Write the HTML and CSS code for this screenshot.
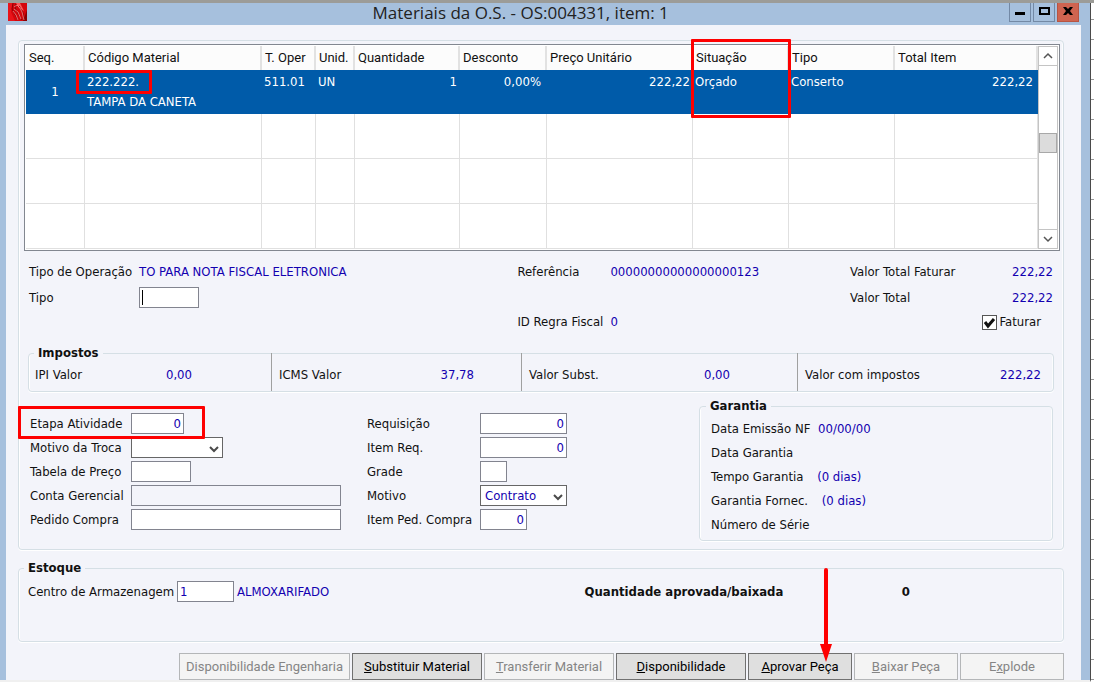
FILE: index.html
```html
<!DOCTYPE html>
<html lang="pt-br">
<head>
    <meta charset="UTF-8">
    <meta name="viewport" content="width=device-width, initial-scale=1.0">
    <title>Materiais da O.S.</title>
    <link rel="stylesheet" href="styles.css">
</head>
<body>
    <div class="window">
        <!-- Barra de título -->
        <header class="title-bar">
            <svg class="app-icon" viewBox="0 0 19 18" aria-hidden="true">
                <rect width="19" height="18" fill="#d4060c"/>
                <path d="M0 0h5l-2 9 4 9H0z" fill="#e8141a"/>
                <path d="M8 0h4l4 8-5-3z" fill="#fa5a5a"/>
                <path d="M19 7v11h-4z" fill="#8c0004"/>
                <path d="M5 0l-1 6 6 11M8 1l-1 4 7 12M11 3l4 7 1 7" fill="none" stroke="#8a0003"/>
                <path d="M6 4l3-2 3 3 2 4 2 8M6 6l4 3 3 7M5 8l3 4 2 5" fill="none" stroke="#ff9c9c" stroke-width=".7"/>
            </svg>
            <h1>Materiais da O.S. - OS:004331, item: 1</h1>
            <div class="window-buttons">
                <button type="button" aria-label="Minimizar">
                    <svg viewBox="0 0 20 18"><path d="M5 9h10v3H5z"/></svg>
                </button>
                <button type="button" aria-label="Maximizar">
                    <svg viewBox="0 0 20 18"><path fill-rule="evenodd" d="M5 4h11v8H5zM7 6v4h7V6z"/></svg>
                </button>
                <button type="button" class="close" aria-label="Fechar">
                    <svg viewBox="0 0 20 18"><path d="M5 4h3l2 2 2-2h3l-3 4 3 4h-3l-2-2-2 2H5l3-4z"/></svg>
                </button>
            </div>
        </header>

        <main class="content">
            <section class="group">
                <!-- Grade de materiais -->
                <div class="grid-box">
                    <table>
                        <colgroup>
                            <col class="c-seq"><col class="c-codigo"><col class="c-oper"><col class="c-unid"><col class="c-qtd">
                            <col class="c-desc"><col class="c-preco"><col class="c-sit"><col class="c-tipo"><col class="c-total">
                        </colgroup>
                        <thead>
                            <tr>
                                <th>Seq.</th>
                                <th>Código Material</th>
                                <th>T. Oper</th>
                                <th>Unid.</th>
                                <th>Quantidade</th>
                                <th>Desconto</th>
                                <th>Preço Unitário</th>
                                <th>Situação<span class="mark mark-situacao"></span></th>
                                <th>Tipo</th>
                                <th>Total Item</th>
                            </tr>
                        </thead>
                        <tbody>
                            <tr class="selected">
                                <td class="seq">1</td>
                                <td>222.222.<br>TAMPA DA CANETA<span class="mark mark-codigo"></span></td>
                                <td>511.01</td>
                                <td>UN</td>
                                <td class="num">1</td>
                                <td class="num desconto">0,00%</td>
                                <td class="num">222,22</td>
                                <td>Orçado</td>
                                <td>Conserto</td>
                                <td class="num total">222,22</td>
                            </tr>
                            <tr><td></td><td></td><td></td><td></td><td></td><td></td><td></td><td></td><td></td><td></td></tr>
                            <tr><td></td><td></td><td></td><td></td><td></td><td></td><td></td><td></td><td></td><td></td></tr>
                            <tr><td></td><td></td><td></td><td></td><td></td><td></td><td></td><td></td><td></td><td></td></tr>
                        </tbody>
                    </table>
                    <div class="scrollbar">
                        <button type="button" aria-label="Subir"><svg viewBox="0 0 10 10"><path d="M1 7l4-4 4 4"/></svg></button>
                        <div class="track"><div class="thumb"></div></div>
                        <button type="button" aria-label="Descer"><svg viewBox="0 0 10 10"><path d="M1 3l4 4 4-4"/></svg></button>
                    </div>
                </div>

                <!-- Dados da operação -->
                <div class="info">
                    <span>Tipo de Operação</span>
                    <span class="value">TO PARA NOTA FISCAL ELETRONICA</span>
                    <span>Referência</span>
                    <span class="value">00000000000000000123</span>
                    <span>Valor Total Faturar</span>
                    <span class="value right">222,22</span>

                    <label for="tipo">Tipo</label>
                    <div class="tipo-field"><input type="text" id="tipo" class="w60"><i class="caret"></i></div>
                    <span class="total-label">Valor Total</span>
                    <span class="value right">222,22</span>

                    <span class="regra-label">ID Regra Fiscal</span>
                    <span class="value">0</span>
                    <div class="faturar">
                        <span class="check">
                            <input type="checkbox" id="faturar" checked>
                            <svg viewBox="0 0 15 15" aria-hidden="true"><path d="M3 7l3 4 6-7" /></svg>
                        </span>
                        <label for="faturar">Faturar</label>
                    </div>
                </div>

                <fieldset class="impostos">
                    <legend>Impostos</legend>
                    <div class="taxes">
                        <div class="tax ipi"><span>IPI Valor</span><span class="value">0,00</span></div>
                        <div class="tax icms"><span>ICMS Valor</span><span class="value">37,78</span></div>
                        <div class="tax subst"><span>Valor Subst.</span><span class="value">0,00</span></div>
                        <div class="tax"><span>Valor com impostos</span><span class="value">222,22</span></div>
                    </div>
                </fieldset>

                <div class="details">
                    <div class="fields fields-left">
                        <label for="etapa">Etapa Atividade</label>
                        <div class="etapa-field"><input type="text" id="etapa" class="w53 right" value="0"></div>
                        <label for="motivo-troca">Motivo da Troca</label>
                        <div class="select w92">
                            <select id="motivo-troca"><option></option></select>
                            <svg viewBox="0 0 10 8" aria-hidden="true"><path d="M1 2l4 4 4-4"/></svg>
                        </div>
                        <label for="tabela">Tabela de Preço</label>
                        <input type="text" id="tabela" class="w60">
                        <label for="conta">Conta Gerencial</label>
                        <input type="text" id="conta" disabled>
                        <label for="pedido">Pedido Compra</label>
                        <input type="text" id="pedido">
                        <span class="mark mark-etapa"></span>
                    </div>

                    <div class="fields fields-middle">
                        <label for="requisicao">Requisição</label>
                        <input type="text" id="requisicao" class="right" value="0">
                        <label for="item-req">Item Req.</label>
                        <input type="text" id="item-req" class="right" value="0">
                        <label for="grade">Grade</label>
                        <input type="text" id="grade" class="w27">
                        <label for="motivo">Motivo</label>
                        <div class="select">
                            <select id="motivo"><option>Contrato</option></select>
                            <svg viewBox="0 0 10 8" aria-hidden="true"><path d="M1 2l4 4 4-4"/></svg>
                        </div>
                        <label for="item-ped">Item Ped. Compra</label>
                        <input type="text" id="item-ped" class="w47 right" value="0">
                    </div>

                    <fieldset class="garantia">
                        <legend>Garantia</legend>
                        <p>Data Emissão NF <span class="value">00/00/00</span></p>
                        <p>Data Garantia</p>
                        <p>Tempo Garantia <span class="value dias">(0 dias)</span></p>
                        <p>Garantia Fornec. <span class="value dias">(0 dias)</span></p>
                        <p>Número de Série</p>
                    </fieldset>
                </div>
            </section>

            <!-- Estoque -->
            <fieldset class="estoque">
                <legend>Estoque</legend>
                <div class="estoque-row">
                    <div class="armazem">
                        <label for="centro">Centro de Armazenagem</label>
                        <input type="text" id="centro" class="w57" value="1">
                        <span class="value">ALMOXARIFADO</span>
                    </div>
                    <strong>Quantidade aprovada/baixada</strong>
                    <strong>0</strong>
                </div>
            </fieldset>

            <!-- Botões de ação -->
            <div class="actions">
                <button type="button" class="wide" disabled>Disponibilidade Engenharia</button>
                <button type="button" class="medium"><u>S</u>ubstituir Material</button>
                <button type="button" class="medium" disabled><u>T</u>ransferir Material</button>
                <button type="button" class="medium"><u>D</u>isponibilidade</button>
                <div class="aprovar">
                    <button type="button"><u>A</u>provar Peça</button>
                    <svg class="arrow" viewBox="0 0 12 94" aria-hidden="true">
                        <path d="M6 2v78" stroke="#fe0000" stroke-width="4" stroke-linecap="round"/>
                        <path d="M0 76h12L6 94z" fill="#fe0000"/>
                    </svg>
                </div>
                <button type="button" disabled><u>B</u>aixar Peça</button>
                <button type="button" disabled>E<u>x</u>plode</button>
            </div>
        </main>
    </div>
</body>
</html>
```
FILE: styles.css
```css
* {
    margin: 0;
    padding: 0;
    box-sizing: border-box;
}

body {
    font-family: "DejaVu Sans Condensed", "DejaVu Sans", Tahoma, sans-serif;
    font-size: 13px;
    line-height: 16px;
    color: #111;
    padding-right: 3px;
    border-top: 3px solid #9c9c98;
    background: repeating-linear-gradient(#fff 0, #fff 19px, #999 19px, #999 20px);
}

/* Janela */
.window {
    background-color: #a6c0dd;
    border-right: 1px solid #4a4a4a;
    border-bottom: 2px solid #f0f0f0;
    padding: 0 9px 0 6px;
}

.title-bar {
    display: grid;
    grid-template-columns: 8fr auto 9fr;
    align-items: start;
    height: 22px;
    padding: 0 2px;
}

.title-bar h1 {
    font-family: "Open Sans", "Noto Sans", sans-serif;
    font-size: 17px;
    font-weight: normal;
    line-height: 19px;
    color: #222;
}

.app-icon {
    width: 19px;
    height: 18px;
}

.window-buttons {
    display: flex;
    justify-content: flex-end;
    gap: 2px;
}

.window-buttons button {
    width: 22px;
    height: 19px;
    border: 1px solid #7389a5;
    border-top: none;
    background-color: #a6c0dd;
}

.window-buttons svg {
    display: block;
    width: 20px;
    height: 18px;
}

.window-buttons .close {
    background-color: #cf6450;
    border-color: #b85442;
}

.content {
    background-color: #f3f4fa;
    padding: 15px 17px 0 12px;
}

.value {
    color: #1200b0;
}

.right {
    text-align: right;
}

/* Caixas de grupo */
.group,
fieldset {
    border: 1px solid #d5dfe5;
    border-radius: 4px;
    box-shadow: inset 1px 0 #fff, inset -1px 0 #fbfcfd, 0 1px #fff;
}

fieldset {
    min-width: 0;
}

.group {
    padding: 3px 3px 8px 5px;
}

legend {
    font-weight: bold;
    line-height: 16px;
    margin-left: 6px;
    padding: 0 4px;
}

/* Grade de materiais */
.grid-box {
    display: flex;
    border: 1px solid #828790;
    padding: 1px;
    background-color: #fff;
}

table {
    flex: 1;
    width: 100%;
    table-layout: fixed;
    border-collapse: separate;
    border-spacing: 0;
}

.c-seq { width: 59px; }
.c-codigo { width: 177px; }
.c-oper { width: 54px; }
.c-unid { width: 39px; }
.c-qtd { width: 105px; }
.c-desc { width: 87px; }
.c-preco { width: 146px; }
.c-sit { width: 96px; }
.c-tipo { width: 106px; }

th {
    position: relative;
    height: 24px;
    padding: 0 3px;
    border-right: 2px solid #e2e2e2;
    background-color: #fcfcfc;
    font-family: Roboto, "Liberation Sans", Arial, sans-serif;
    font-weight: normal;
    text-align: left;
    white-space: nowrap;
}

td {
    position: relative;
    height: 45px;
    padding: 2px 2px 0;
    border-right: 1px solid #e0e0e0;
    border-bottom: 1px solid #e0e0e0;
    line-height: 20px;
    vertical-align: top;
    white-space: nowrap;
}

.selected td {
    height: 44px;
    color: #fff;
    background-color: #005ba9;
    border-color: #005ba9;
}

td.seq {
    padding-top: 0;
    text-align: center;
    vertical-align: middle;
}

td.num {
    text-align: right;
}

td.desconto {
    padding-right: 5px;
}

td.total {
    padding-right: 4px;
}

.scrollbar {
    display: flex;
    flex-direction: column;
    width: 20px;
    border: 1px solid #c4c4c4;
}

.scrollbar button {
    height: 19px;
    border: none;
    background-color: #fff;
}

.scrollbar button:first-child {
    border-bottom: 1px solid #c4c4c4;
}

.scrollbar button:last-child {
    border-top: 1px solid #c4c4c4;
}

.scrollbar svg {
    width: 10px;
    height: 10px;
    fill: none;
    stroke: #555;
    stroke-width: 1.5;
}

.track {
    flex: 1;
    padding-top: 67px;
}

.thumb {
    height: 20px;
    border: 1px solid #a8a8a8;
    background-color: #dcdcdc;
}

/* Dados da operação */
.info {
    display: grid;
    grid-template-columns: 110px 379fr 93px 240fr 120px 83px;
    grid-template-rows: 18px 21px 16px;
    row-gap: 6px;
    align-items: center;
    padding: 12px 7px 0 5px;
}

.info span,
.info label {
    white-space: nowrap;
}

.total-label {
    grid-column: 5;
}

.regra-label {
    grid-column: 3;
}

.faturar {
    grid-column: 5 / 7;
    display: flex;
    justify-content: flex-end;
    align-items: center;
    gap: 3px;
    padding-right: 12px;
}

.check {
    position: relative;
    width: 15px;
    height: 15px;
}

.check input {
    display: block;
    appearance: none;
    width: 15px;
    height: 15px;
    border: 1px solid #555;
    background-color: #fff;
}

.check svg {
    position: absolute;
    inset: 0;
    fill: none;
    stroke: #111;
    stroke-width: 3;
    pointer-events: none;
}

/* Campos */
input[type="text"],
select {
    width: 100%;
    height: 21px;
    padding: 0 2px;
    border: 1px solid #82848f;
    background-color: #fff;
    font: inherit;
    color: #1200b0;
}

input[type="text"]:disabled {
    background-color: #f3f4fa;
}

input.w27 { width: 27px; }
input.w47 { width: 47px; }
input.w53 { width: 53px; }
input.w57 { width: 57px; }
input.w60 { width: 60px; }
.select.w92 { width: 92px; }

.tipo-field {
    position: relative;
    height: 21px;
}

.caret {
    position: absolute;
    left: 3px;
    top: 3px;
    width: 1px;
    height: 15px;
    background-color: #000;
}

.select {
    position: relative;
    height: 21px;
}

.select select {
    display: block;
    appearance: none;
    padding: 0 4px;
    border-color: #666;
}

.select svg {
    position: absolute;
    right: 4px;
    top: 8px;
    width: 10px;
    height: 8px;
    fill: none;
    stroke: #4a4a4a;
    stroke-width: 2;
    pointer-events: none;
}

/* Impostos */
.impostos {
    margin: 15px 6px 6px 4px;
}

.impostos legend {
    margin-left: 5px;
}

.taxes {
    display: grid;
    grid-template-columns: 242fr 250fr 276fr 256fr;
    margin-top: -8px;
}

.tax {
    display: flex;
    justify-content: space-between;
    padding: 14px 12px 8px 7px;
    border-left: 1px solid #a0a0a0;
}

.tax.ipi {
    padding-right: 79px;
    padding-left: 6px;
    border-left: none;
}

.tax.icms {
    padding-right: 47px;
}

.tax.subst {
    padding-right: 67px;
}

/* Detalhes */
.details {
    display: grid;
    grid-template-columns: 337fr 332fr 354fr;
    align-items: start;
    padding: 0 7px 0 6px;
}

.fields {
    position: relative;
    display: grid;
    grid-auto-rows: 21px;
    row-gap: 3px;
    align-items: center;
    padding-top: 15px;
    white-space: nowrap;
}

.fields-left {
    grid-template-columns: 101px 210px;
}

.fields-middle {
    grid-template-columns: 113px 87px;
}

.etapa-field {
    display: flex;
}

.garantia {
    padding: 2px 11px 4px;
}

.garantia legend {
    margin-left: -5px;
}

.garantia p {
    padding-top: 1px;
    line-height: 23px;
}

.garantia .value {
    margin-left: 4px;
}

.garantia .dias {
    margin-left: 10px;
}

/* Estoque */
.estoque {
    margin-top: 10px;
    padding: 0 9px 39px;
}

.estoque legend {
    margin-left: -4px;
}

.estoque-row {
    display: grid;
    grid-template-columns: 556fr 317fr 152fr;
    align-items: center;
    padding-top: 5px;
    white-space: nowrap;
}

.armazem {
    display: flex;
    align-items: center;
    gap: 3px;
}

.armazem label {
    width: 146px;
}

/* Botões de ação */
.actions {
    display: flex;
    justify-content: flex-end;
    gap: 2px;
    padding-top: 11px;
}

.actions button {
    width: 104px;
    height: 27px;
    border: 1px solid #707070;
    background-color: #dfdfdf;
    font-family: Roboto, "Liberation Sans", Arial, sans-serif;
    font-size: 13px;
    color: #000;
    white-space: nowrap;
}

.actions button:disabled {
    border-color: #b4b6b8;
    background-color: #f4f4f4;
    color: #858585;
}

.actions .wide {
    width: 171px;
}

.actions .medium {
    width: 130px;
}

.aprovar {
    position: relative;
}

.arrow {
    position: absolute;
    left: 72px;
    bottom: 18px;
    width: 12px;
    height: 94px;
    pointer-events: none;
}

/* Marcações em vermelho */
.mark {
    position: absolute;
    z-index: 1;
    border: 3px solid #fe0000;
    border-radius: 1px;
    pointer-events: none;
}

.mark-situacao {
    top: -7px;
    left: -2px;
    right: -4px;
    height: 79px;
}

.mark-codigo {
    top: 0;
    left: -9px;
    width: 76px;
    height: 24px;
}

.mark-etapa {
    top: 8px;
    left: -12px;
    width: 187px;
    height: 33px;
}
```
